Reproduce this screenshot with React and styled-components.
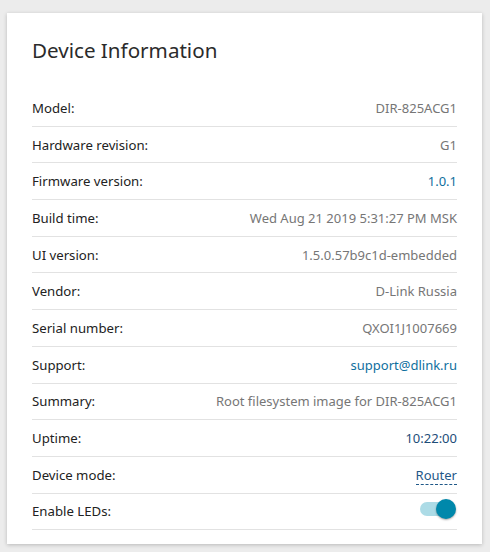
import styled, { createGlobalStyle } from "styled-components"

const GlobalStyle = createGlobalStyle`
  html, body {
    margin: 0;
    background: #ececec;
  }
  body {
    padding: 13px 8px 8px 7px;
    font-family: "Noto Sans", "DejaVu Sans", sans-serif;
  }
`

const tones = {
  plain: "#767676",
  link: "#0f6f9e",
  dark: "#1d4d78",
}

const Card = styled.section`
  width: 475px;
  box-sizing: border-box;
  padding: 23px 25px 14px;
  background: #fff;
  box-shadow: 0 1px 4px rgba(0, 0, 0, 0.22);
`

const Title = styled.h1`
  margin: 0 0 25px;
  font-size: 20.6px;
  line-height: 29px;
  font-weight: 400;
  color: #2b2b2b;
`

const List = styled.dl`
  margin: 0;
`

const Row = styled.div`
  display: flex;
  align-items: center;
  justify-content: space-between;
  height: 35.7px;
  border-bottom: 1px solid #e2e2e2;
`

const Label = styled.dt`
  font-size: 13.2px;
  color: #222;
`

const Value = styled.dd`
  margin: 0;
  font-size: 13px;
  color: ${({ $tone = "plain" }) => tones[$tone]};
`

const ModeLink = styled.span`
  color: #1f5888;
  border-bottom: 1px dashed #1f5888;
  line-height: 16px;
`

const Switch = styled.span`
  position: relative;
  display: inline-block;
  width: 36px;
  height: 20px;
  margin-right: 1px;

  &::before {
    content: "";
    position: absolute;
    left: 0;
    top: 3px;
    width: 32px;
    height: 14px;
    border-radius: 7px;
    background: #acdbe6;
  }

  &::after {
    content: "";
    position: absolute;
    right: 0;
    top: 0;
    width: 20px;
    height: 20px;
    border-radius: 50%;
    background: #0088ab;
    box-shadow: 0 1px 2px rgba(0, 0, 0, 0.35);
  }
`

const info = [
  ["Model:", "DIR-825ACG1"],
  ["Hardware revision:", "G1"],
  ["Firmware version:", "1.0.1", "link"],
  ["Build time:", "Wed Aug 21 2019 5:31:27 PM MSK"],
  ["UI version:", "1.5.0.57b9c1d-embedded"],
  ["Vendor:", "D-Link Russia"],
  ["Serial number:", "QXOI1J1007669"],
  ["Support:", "support@dlink.ru", "link"],
  ["Summary:", "Root filesystem image for DIR-825ACG1"],
  ["Uptime:", "10:22:00", "dark"],
]

export default function App() {
  return (
    <>
      <GlobalStyle />
      <Card>
        <Title>Device Information</Title>
        <List>
          {info.map(([label, value, tone]) => (
            <Row key={label}>
              <Label>{label}</Label>
              <Value $tone={tone}>{value}</Value>
            </Row>
          ))}
          <Row>
            <Label>Device mode:</Label>
            <Value>
              <ModeLink>Router</ModeLink>
            </Value>
          </Row>
          <Row>
            <Label>Enable LEDs:</Label>
            <Value>
              <Switch />
            </Value>
          </Row>
        </List>
      </Card>
    </>
  )
}
